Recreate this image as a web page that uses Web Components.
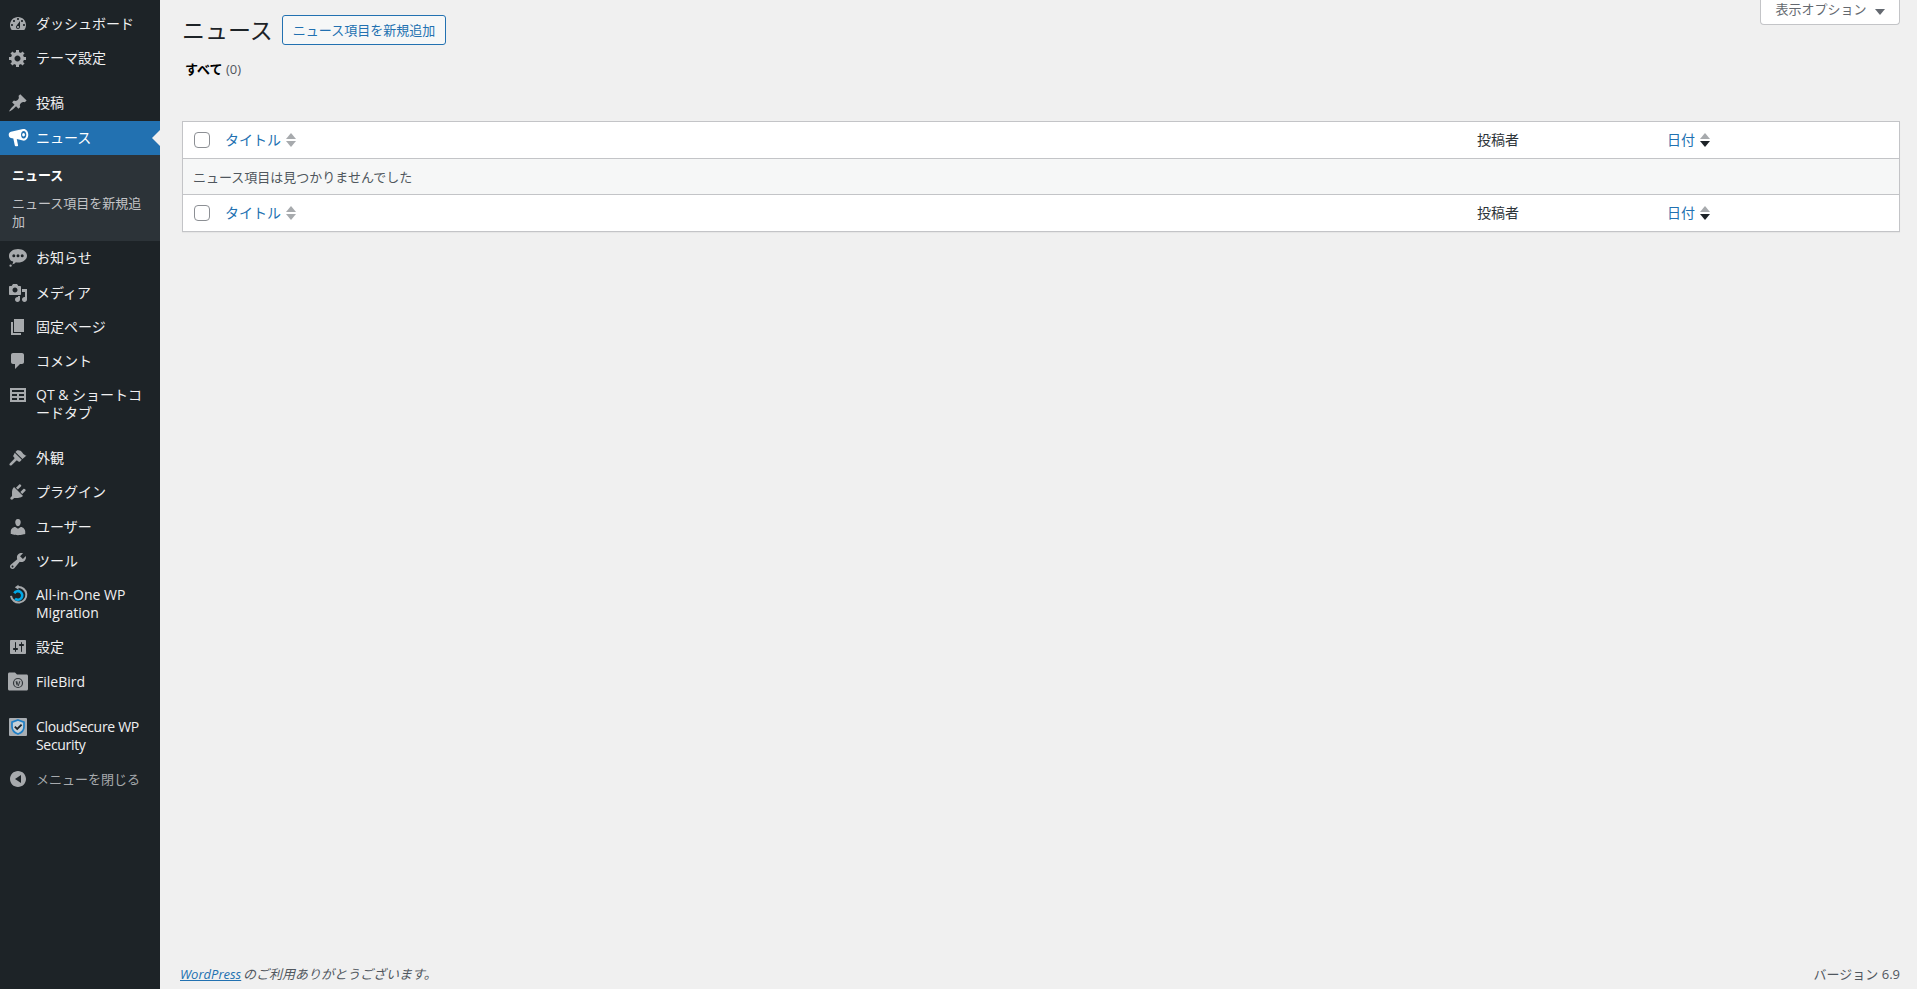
<!DOCTYPE html>
<html lang="ja"><head><meta charset="utf-8"><title>ニュース</title>
<style>
html,body{margin:0;padding:0;height:100%;overflow:hidden;background:#f0f0f0}
body{font-family:"Open Sans","Noto Sans CJK JP",sans-serif;font-size:13px;color:#3c434a}
</style></head><body>
<wp-app>
  <wp-sidebar slot="side">
    <wp-item icon="dashboard">ダッシュボード</wp-item>
    <wp-item icon="generic">テーマ設定</wp-item>
    <wp-sep h="11.4"></wp-sep>
    <wp-item icon="post">投稿</wp-item>
    <wp-item icon="megaphone" active>ニュース</wp-item>
    <wp-submenu>
      <wp-subitem current>ニュース</wp-subitem>
      <wp-subitem>ニュース項目を新規追加</wp-subitem>
    </wp-submenu>
    <wp-item icon="status">お知らせ</wp-item>
    <wp-item icon="media">メディア</wp-item>
    <wp-item icon="page">固定ページ</wp-item>
    <wp-item icon="comments">コメント</wp-item>
    <wp-item icon="table">QT &amp; ショートコ<br>ードタブ</wp-item>
    <wp-sep h="10.5"></wp-sep>
    <wp-item icon="appearance">外観</wp-item>
    <wp-item icon="plugins">プラグイン</wp-item>
    <wp-item icon="users">ユーザー</wp-item>
    <wp-item icon="tools">ツール</wp-item>
    <wp-item icon="aio">All-in-One WP<br>Migration</wp-item>
    <wp-item icon="settings">設定</wp-item>
    <wp-item icon="filebird">FileBird</wp-item>
    <wp-sep h="11"></wp-sep>
    <wp-item icon="cloud" tight>CloudSecure WP<br>Security</wp-item>
    <wp-item icon="collapse" muted>メニューを閉じる</wp-item>
  </wp-sidebar>
  <wp-screen-options>表示オプション</wp-screen-options>
  <wp-heading title-text="ニュース" action="ニュース項目を新規追加"></wp-heading>
  <wp-filters>すべて</wp-filters>
  <wp-list-table>
    <wp-row head></wp-row>
    <wp-empty>ニュース項目は見つかりませんでした</wp-empty>
    <wp-row></wp-row>
  </wp-list-table>
  <wp-footer slot="footer"></wp-footer>
</wp-app>
<script>
const ICONS={
dashboard:'<path d="M3.76 16h12.48c1.1-1.37 1.76-3.11 1.76-5 0-4.42-3.58-8-8-8s-8 3.58-8 8c0 1.89.66 3.63 1.76 5zM10 4c.55 0 1 .45 1 1s-.45 1-1 1-1-.45-1-1 .45-1 1-1zM6 6c.55 0 1 .45 1 1s-.45 1-1 1-1-.45-1-1 .45-1 1-1zm8 0c.55 0 1 .45 1 1s-.45 1-1 1-1-.45-1-1 .45-1 1-1zm-5.37 5.55L12 7v6c0 1.1-.9 2-2 2s-2-.9-2-2c0-.57.24-1.08.63-1.45zM4 10c.55 0 1 .45 1 1s-.45 1-1 1-1-.45-1-1 .45-1 1-1zm12 0c.55 0 1 .45 1 1s-.45 1-1 1-1-.45-1-1 .45-1 1-1zm-5 3c0-.55-.45-1-1-1s-1 .45-1 1 .45 1 1 1 1-.45 1-1z"/>',
generic:'<path d="M18 12h-2.18c-.17.7-.44 1.35-.81 1.93l1.54 1.54-2.1 2.1-1.54-1.54c-.58.36-1.23.63-1.91.79V19H8v-2.18c-.68-.16-1.33-.43-1.91-.79l-1.54 1.54-2.12-2.12 1.54-1.54c-.36-.58-.63-1.23-.79-1.91H1V9.03h2.17c.16-.7.44-1.35.8-1.94L2.43 5.55l2.1-2.1 1.54 1.54c.58-.37 1.24-.64 1.93-.81V2h3v2.18c.68.16 1.33.43 1.91.79l1.54-1.54 2.12 2.12-1.54 1.54c.36.59.64 1.24.8 1.94H18V12zm-8.5 1.5c1.66 0 3-1.34 3-3s-1.34-3-3-3-3 1.34-3 3 1.34 3 3 3z"/>',
post:'<path d="M10.44 3.02l1.82-1.82 6.36 6.35-1.83 1.82c-1.05-.68-2.48-.57-3.41.36l-.75.75c-.92.93-1.04 2.35-.35 3.41l-1.83 1.82-2.41-2.41-2.8 2.79c-.42.42-3.38 2.71-3.8 2.29s1.86-3.39 2.28-3.81l2.79-2.79L4.1 9.36l1.83-1.82c1.05.69 2.48.57 3.4-.36l.75-.75c.93-.92 1.05-2.35.36-3.41z"/>',
megaphone:'<g transform="translate(-1 -2.500) scale(1.15)"><path fill-rule="evenodd" d="M14.5 3c2.2 0 4 2.3 4 5.100s-1.800 5.100-4 5.100c-.2 0-.4 0-.6-.1L8.500 11.800l1.100 5.400c.1.500-.2.800-.6.800H7.600c-.4 0-.7-.3-.8-.7L5.500 11.200 3.400 10.800C2 10.500 1.500 9.300 1.500 8.100s.5-2.400 1.900-2.700L13.900 3.100c.2-.1.400-.1.600-.1zM14.500 4.800c-1.300 0-2.300 1.500-2.300 3.300s1 3.300 2.300 3.300 2.300-1.500 2.300-3.300-1-3.300-2.300-3.300zM14.400 6.600c.7 0 1.200.7 1.200 1.500s-.5 1.500-1.200 1.500-1.200-.7-1.200-1.500.5-1.500 1.200-1.500z"/></g>',
status:'<path fill-rule="evenodd" d="M10 1c4.900 0 9 2.900 9 6.700s-4.100 6.800-9 6.800c-.7 0-1.400-.1-2.100-.2-1 1.100-2.300 1.900-3.700 2.100.6-.9 1-1.800 1-3C2.700 13.200 1 10.800 1 7.700 1 3.900 5.100 1 10 1zM5.800 6.300a1.500 1.500 0 1 0 0 3 1.500 1.500 0 0 0 0-3zm4.200 0a1.500 1.500 0 1 0 0 3 1.500 1.500 0 0 0 0-3zm4.200 0a1.500 1.500 0 1 0 0 3 1.500 1.500 0 0 0 0-3zM2.600 16.400a1.200 1.200 0 1 1 0 2.400 1.200 1.200 0 0 1 0-2.400z"/>',
media:'<path d="M13 11V4c0-.55-.45-1-1-1h-1.670L9 1H5L3.670 3H2c-.55 0-1 .45-1 1v7c0 .55.45 1 1 1h10c.55 0 1-.45 1-1zM7 4.500c1.380 0 2.500 1.120 2.500 2.500S8.380 9.500 7 9.500 4.500 8.380 4.500 7 5.620 4.500 7 4.500zM14 6h5v10.500c0 1.380-1.120 2.500-2.500 2.500S14 17.880 14 16.500s1.120-2.500 2.500-2.500c.17 0 .34.020.5.050V9h-3V6zm-4 8.050V13h2v3.500c0 1.380-1.120 2.500-2.500 2.500S7 17.880 7 16.500 8.120 14 9.500 14c.17 0 .34.020.5.050z"/>',
page:'<path d="M6 15V2h10v13H6zm-1 1h8v2H3V5h2v11z"/>',
comments:'<path d="M5 2h9c1.100 0 2 .9 2 2v7c0 1.100-.9 2-2 2h-2l-5 5v-5H5c-1.100 0-2-.9-2-2V4c0-1.100.9-2 2-2z"/>',
table:'<path fill-rule="evenodd" d="M18 17V3H2v14h16zM16 7H4V5h12v2zm-7 4H4V9h5v2zm7 0h-5V9h5v2zm-7 4H4v-2h5v2zm7 0h-5v-2h5v2z"/>',
appearance:'<path d="M14.480 11.060L7.410 3.990l1.500-1.500c.5-.56 2.300-.47 3.590.32 1.290.78 1.970 2.260 2.660 3.060.69.8 1.170.99 1.840 1.340.67.35 1.500.4 1.500.4zM6.710 4.700l7.070 7.070-1.450 1.450c-.7.7-1.720.75-2.360.12l-.5-.5c-.45-.45-1.100-.3-1.500.1L3.600 17.200c-.5.5-1.300.5-1.800 0s-.5-1.300 0-1.800l4.300-4.300c.4-.4.55-1.050.1-1.500l-.5-.5c-.64-.64-.58-1.660.12-2.360z"/>',
plugins:'<path d="M13.110 4.360L9.870 7.600 8 5.730l3.240-3.240c.35-.34 1.050-.2 1.560.32.52.51.66 1.210.31 1.550zm-8 1.770l.91-1.120 9.010 9.010-1.190.84c-.71.71-2.630 1.160-3.820 1.160H6.140L4.900 17.260c-.59.59-1.540.59-2.120 0-.59-.58-.59-1.530 0-2.120l1.240-1.240v-3.880c0-1.130.4-3.190 1.090-3.890zm7.260 3.970l3.240-3.240c.34-.35 1.040-.21 1.550.31.52.51.66 1.210.31 1.550l-3.240 3.250z"/>',
users:'<path d="M10 9.250c-2.270 0-2.730-3.440-2.730-3.440C7 4.020 7.820 2 9.970 2c2.160 0 2.980 2.020 2.710 3.810 0 0-.41 3.440-2.680 3.440zm0 2.570L12.720 10c2.390 0 4.520 2.330 4.520 4.530v2.490s-3.650 1.130-7.240 1.130c-3.650 0-7.240-1.130-7.240-1.130v-2.490c0-2.250 1.940-4.480 4.470-4.480z"/>',
tools:'<path d="M16.680 9.770c-1.340 1.340-3.300 1.670-4.950.99l-5.410 6.520c-.99.99-2.590.99-3.580 0s-.99-2.590 0-3.570l6.520-5.420c-.68-1.650-.35-3.610.99-4.950 1.280-1.280 3.120-1.620 4.720-1.060l-2.890 2.890 2.820 2.820 2.860-2.870c.53 1.580.18 3.390-1.080 4.670zM3.810 16.210c.4.39 1.040.39 1.430 0 .4-.4.4-1.040 0-1.430-.39-.4-1.030-.4-1.430 0-.39.39-.39 1.030 0 1.430z"/>',
settings:'<path d="M18 16V4c0-.55-.45-1-1-1H3c-.55 0-1 .45-1 1v12c0 .55.45 1 1 1h14c.55 0 1-.45 1-1zM8 11h1c.55 0 1 .45 1 1s-.45 1-1 1H8v1.500c0 .28-.22.5-.5.5s-.5-.22-.5-.5V13H6c-.55 0-1-.45-1-1s.45-1 1-1h1V5.500c0-.28.22-.5.5-.5s.5.22.5.5V11zm5-2h-1c-.55 0-1-.45-1-1s.45-1 1-1h1V5.500c0-.28.22-.5.5-.5s.5.22.5.5V7h1c.55 0 1 .45 1 1s-.45 1-1 1h-1v5.500c0 .28-.22.5-.5.5s-.5-.22-.5-.5V9z"/>',
aio:'<g fill="none"><path d="M10 2.100A7.700 7.700 0 1 1 3 10.800" stroke="#a7aaad" stroke-width="2"/><path d="M10.500 -.2L6.800 2.300 10.500 4.800z" fill="#a7aaad"/><path d="M6.300 8.200A4.300 4.300 0 1 1 7 13.600" stroke="#00a8e8" stroke-width="2.600"/></g>',
filebird:'<path fill-rule="evenodd" d="M0 2C0 1.200.6.500 1.500.5H7L9 2.500h9.500c.9 0 1.500.6 1.500 1.500v13c0 .9-.6 1.500-1.500 1.500h-17C.6 18.500 0 17.900 0 17V2z"/><circle cx="10" cy="11" r="4.500" fill="none" stroke="#33383c" stroke-width="1.200"/><path d="M7.600 9.300h1.700l.9 3.400 1-3.400h1.200l-1.700 4.700h-.9l-.7-2.300-.8 2.300H8.500z" fill="#33383c"/>',
cloud:'<rect x="1" y="1" width="18" height="18" rx="1" fill="#a8adb2"/><path d="M10 3l6 2.200v4.600c0 3.500-2.600 6-6 7.200-3.400-1.200-6-3.700-6-7.200V5.200z" fill="#c5d0d8" stroke="#1f7fc6" stroke-width="1.700"/><path d="M6.800 9.600l2.400 2.400L13.600 7.600" fill="none" stroke="#1d2327" stroke-width="1.800"/>',
collapse:'<path d="M18 10c0-4.420-3.580-8-8-8s-8 3.580-8 8 3.580 8 8 8 8-3.580 8-8zm-5-4v8l-6-4z"/>'
};
function def(name,css,html,init){
  customElements.define(name,class extends HTMLElement{
    connectedCallback(){
      if(this.shadowRoot)return;
      const s=this.attachShadow({mode:'open'});
      s.innerHTML='<style>'+css+'</style>'+(typeof html==='function'?html(this):html);
      if(init)init(this,s);
    }
  });
}
def('wp-app',`
 :host{display:grid;grid-template-columns:160px 1fr;height:989px;position:relative;overflow:hidden}
 .side{background:#1d2327;height:989px;overflow:hidden}
 .main{display:flex;flex-direction:column;height:989px;padding:0 17px 0 22px;box-sizing:border-box;min-width:0}
 .foot{margin-top:auto}
`,`<div class="side"><slot name="side"></slot></div><div class="main"><slot></slot><div class="foot"><slot name="footer"></slot></div></div>`);
def('wp-sidebar',`:host{display:flex;flex-direction:column;padding-top:6.6px}`,`<slot></slot>`);
def('wp-sep',`:host{display:block}`,``,(e)=>{e.style.height=e.getAttribute('h')+'px'});
def('wp-item',`
 :host{display:flex;position:relative;font:14px/18.2px "Open Sans","Noto Sans CJK JP",sans-serif;color:#f0f0f1;padding:8px 0 8px 36px;min-height:18.2px}
 :host([active]){background:#2271b1;color:#fff}
 :host([active])::after{content:"";position:absolute;right:0;top:50%;margin-top:-8px;border:8px solid transparent;border-right-color:#f0f0f0;border-left:0}
 :host([muted]){color:#a7aaad;font-size:13px}
 :host([tight]){letter-spacing:-.32px}
 svg{position:absolute;left:8px;top:7px;width:20px;height:20px;fill:#a7aaad;overflow:visible}
 :host([active]) svg{fill:#fff}
`,(e)=>`<svg viewBox="0 0 20 20" aria-hidden="true">${ICONS[e.getAttribute('icon')]||''}</svg><span><slot></slot></span>`);
def('wp-submenu',`:host{display:block;background:#2c3338;padding:6px 0 6px}`,`<slot></slot>`);
def('wp-subitem',`
 :host{display:block;font:13px/18.2px "Open Sans","Noto Sans CJK JP",sans-serif;color:#c3c4c7;padding:5px 12px;width:136px;word-break:break-all}
 :host([current]){color:#fff;font-weight:600}
`,`<slot></slot>`);
def('wp-screen-options',`
 :host{position:absolute;top:0;right:17px;width:140px;height:25px;box-sizing:border-box;background:#fff;border:1px solid #c3c4c7;border-top:0;border-radius:0 0 4px 4px;color:#646970;font:13px/18px "Open Sans","Noto Sans CJK JP",sans-serif;display:flex;justify-content:center;gap:6px}
 i{align-self:center;width:0;height:0;border:5px solid transparent;border-top:6px solid #646970;border-bottom:0;margin-left:2px}
`,`<span><slot></slot></span><i></i>`);
def('wp-heading',`
 :host{display:flex;align-items:flex-start;padding-top:15px;height:30px}
 h1{margin:0 9px 0 0;font:400 23px/30px "Open Sans","Noto Sans CJK JP",sans-serif;color:#1d2327}
 a{display:block;box-sizing:border-box;height:30px;border:1px solid #2271b1;border-radius:3px;background:#f6f7f7;color:#2271b1;padding:0 10px;font:13px/28px "Open Sans","Noto Sans CJK JP",sans-serif;white-space:nowrap}
`,(e)=>`<h1>${e.getAttribute('title-text')}</h1><a>${e.getAttribute('action')}</a>`);
def('wp-filters',`
 :host{display:block;margin:14px 0 0 3px;height:62px;font:13px/20px "Open Sans","Noto Sans CJK JP",sans-serif;color:#50575e}
 b{color:#000;font-weight:600}
`,`<b><slot></slot></b> (0)`);
def('wp-list-table',`:host{display:block;border:1px solid #c3c4c7;background:#fff;box-shadow:0 1px 1px rgba(0,0,0,.04)}`,`<slot></slot>`);
def('wp-row',`
 :host{display:grid;grid-template-columns:42px 1fr 190px 242px;height:36px;align-items:center;font:14px/20px "Open Sans","Noto Sans CJK JP",sans-serif;color:#2c3338}
 .cb{width:16px;height:16px;box-sizing:border-box;border:1px solid #8c8f94;border-radius:4px;background:#fff;margin-left:11px}
 a{color:#2271b1;margin-right:5px}
 .sort{display:inline-flex;flex-direction:column;gap:2px;width:10px;align-items:center}
 .sort i{display:block;width:0;height:0;border:5px solid transparent}
 .up{border-top:0!important;border-bottom:6px solid #a7aaad!important}
 .dn{border-bottom:0!important;border-top:6px solid #a7aaad!important}
 .dn.on{border-top-color:#1d2327!important}
 .c{display:flex;align-items:center}
`,(e)=>`<div class="cb"></div>
 <div class="c"><a>タイトル</a><span class="sort"><i class="up"></i><i class="dn"></i></span></div>
 <div class="c" style="padding-left:10px">投稿者</div>
 <div class="c" style="padding-left:10px"><a>日付</a><span class="sort"><i class="up"></i><i class="dn on"></i></span></div>`);
def('wp-empty',`
 :host{display:block;background:#f6f7f7;border-top:1px solid #c3c4c7;border-bottom:1px solid #c3c4c7;height:37px;box-sizing:border-box;padding:8px 10px;font:13px/20px "Open Sans","Noto Sans CJK JP",sans-serif;color:#50575e}
`,`<slot></slot>`);
def('wp-footer',`
 :host{display:flex;justify-content:space-between;padding:0 0 5px 0;margin-left:-2px;font:13px/20px "Open Sans","Noto Sans CJK JP",sans-serif;color:#50575e}
 i{font-style:italic;word-spacing:-1.500px}
 a{color:#2271b1;text-decoration:underline}
`,`<i><a>WordPress</a> のご利用ありがとうございます。</i><span>バージョン 6.9</span>`);
</script>
</body></html>
